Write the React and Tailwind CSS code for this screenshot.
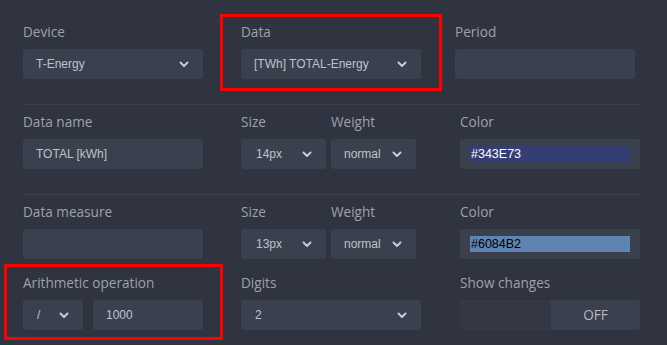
import React from "react";

const labelCls = "text-[13.6px] leading-[20px] text-[#9ea2a9] mb-[7px] whitespace-nowrap";
const boxCls = "h-[30px] rounded-[3px] bg-[#3b404e] flex items-center text-[12px] text-[#bfc2c9]";

function Chevron() {
  return (
    <svg width="10" height="7" viewBox="0 0 10 7" className="shrink-0">
      <path d="M1.5 1.5 L5 5 L8.5 1.5" fill="none" stroke="#c8ccd2" strokeWidth="2" strokeLinecap="round" strokeLinejoin="round" />
    </svg>
  );
}

function Field({ label, className, children }) {
  return (
    <div className={className}>
      <div className={labelCls} style={{ fontFamily: "'Open Sans', sans-serif" }}>{label}</div>
      {children}
    </div>
  );
}

function Select({ value, className }) {
  return (
    <div className={`${boxCls} justify-between pl-[13px] pr-[14px] ${className}`}>
      <span>{value}</span>
      <Chevron />
    </div>
  );
}

function Input({ value, className }) {
  return <div className={`${boxCls} pl-[13px] ${className}`}>{value}</div>;
}

function ColorBox({ value, bg, fg }) {
  return (
    <div className={`${boxCls} w-[180px] pl-[10px]`}>
      <div className={`w-[160px] h-[16px] ${bg} ${fg} text-[12.5px] leading-[16px] pl-[1px]`}>{value}</div>
    </div>
  );
}

function Divider() {
  return <div className="w-[617px] h-px bg-[#3b404b] mt-[25px] mb-[7px]" />;
}

export default function App() {
  return (
    <div
      className="relative w-full h-[345px] overflow-hidden bg-[#2f3440] pl-[23px] pt-[22px]"
      style={{ fontFamily: "'Liberation Sans', Arial, sans-serif" }}
    >
      <div className="flex">
        <Field label="Device" className="w-[180px]">
          <Select value="T-Energy" className="w-[180px]" />
        </Field>
        <Field label="Data" className="w-[180px] ml-[38px]">
          <Select value="[TWh] TOTAL-Energy" className="w-[180px]" />
        </Field>
        <Field label="Period" className="w-[180px] ml-[34px]">
          <Input value="" className="w-[180px]" />
        </Field>
      </div>

      <Divider />

      <div className="flex">
        <Field label="Data name" className="w-[180px]">
          <Input value="TOTAL [kWh]" className="w-[180px]" />
        </Field>
        <Field label="Size" className="w-[85px] ml-[38px]">
          <Select value="14px" className="w-[85px] pl-[15px]" />
        </Field>
        <Field label="Weight" className="w-[85px] ml-[5px]">
          <Select value="normal" className="w-[85px]" />
        </Field>
        <Field label="Color" className="w-[180px] ml-[44px]">
          <ColorBox value="#343E73" bg="bg-[#343e73]" fg="text-white" />
        </Field>
      </div>

      <Divider />

      <div className="flex">
        <Field label="Data measure" className="w-[180px]">
          <Input value="" className="w-[180px]" />
        </Field>
        <Field label="Size" className="w-[85px] ml-[38px]">
          <Select value="13px" className="w-[85px] pl-[15px]" />
        </Field>
        <Field label="Weight" className="w-[85px] ml-[5px]">
          <Select value="normal" className="w-[85px]" />
        </Field>
        <Field label="Color" className="w-[180px] ml-[44px]">
          <ColorBox value="#6084B2" bg="bg-[#6084b2]" fg="text-black" />
        </Field>
      </div>

      <div className="flex mt-[14px]">
        <Field label="Arithmetic operation" className="w-[180px]">
          <div className="flex gap-[10px]">
            <Select value="/" className="w-[60px] pl-[14px]" />
            <Input value="1000" className="w-[110px]" />
          </div>
        </Field>
        <Field label="Digits" className="w-[180px] ml-[38px]">
          <Select value="2" className="w-[180px] pl-[14px]" />
        </Field>
        <Field label="Show changes" className="w-[180px] ml-[39px]">
          <div className="flex h-[30px] w-[180px] rounded-[3px] bg-[#3b404e] overflow-hidden">
            <div className="w-[91px] bg-[#333844] rounded-[3px]" />
            <div
              className="flex-1 flex items-center justify-center text-[13.6px] text-[#b4b8bf]"
              style={{ fontFamily: "'Open Sans', sans-serif" }}
            >
              OFF
            </div>
          </div>
        </Field>
      </div>

      <div className="absolute left-[220px] top-[14px] w-[222px] h-[77px] border-[3px] border-[#ff0000]" />
      <div className="absolute left-[4px] top-[264px] w-[219px] h-[76px] border-[3px] border-[#ff0000]" />
    </div>
  );
}
